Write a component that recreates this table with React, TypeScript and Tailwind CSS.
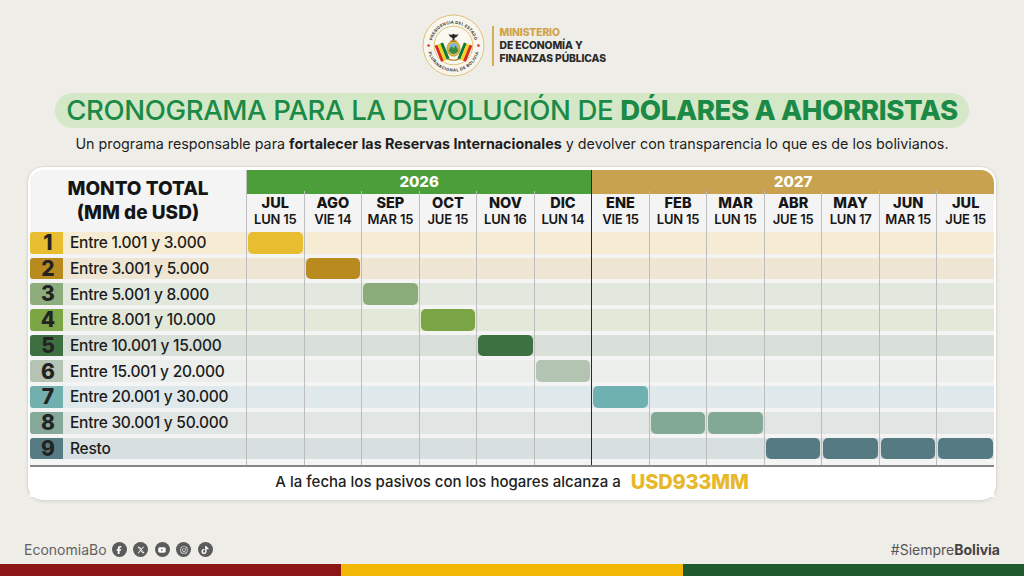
import { FaFacebookF, FaXTwitter, FaYoutube, FaInstagram, FaTiktok } from "react-icons/fa6";

const months: [string, string][] = [
  ["JUL", "LUN 15"], ["AGO", "VIE 14"], ["SEP", "MAR 15"], ["OCT", "JUE 15"], ["NOV", "LUN 16"], ["DIC", "LUN 14"],
  ["ENE", "VIE 15"], ["FEB", "LUN 15"], ["MAR", "LUN 15"], ["ABR", "JUE 15"], ["MAY", "LUN 17"], ["JUN", "MAR 15"], ["JUL", "JUE 15"],
];

type Row = { n: number; label: string; badge: string; band: string; bar: string; cols: number[] };

const rows: Row[] = [
  { n: 1, label: "Entre 1.001 y 3.000", badge: "bg-[#e8bd2f]", band: "bg-[#f5ecd3]", bar: "bg-[#e8bd2f]", cols: [0] },
  { n: 2, label: "Entre 3.001 y 5.000", badge: "bg-[#b98a1e]", band: "bg-[#efe5d3]", bar: "bg-[#b98a1e]", cols: [1] },
  { n: 3, label: "Entre 5.001 y 8.000", badge: "bg-[#8dad7d]", band: "bg-[#e3e8df]", bar: "bg-[#8aac7a]", cols: [2] },
  { n: 4, label: "Entre 8.001 y 10.000", badge: "bg-[#7ca646]", band: "bg-[#e2e9d9]", bar: "bg-[#7aa544]", cols: [3] },
  { n: 5, label: "Entre 10.001 y 15.000", badge: "bg-[#3e6f40]", band: "bg-[#d8e0d9]", bar: "bg-[#3d7141]", cols: [4] },
  { n: 6, label: "Entre 15.001 y 20.000", badge: "bg-[#b4c3b3]", band: "bg-[#ebeeeb]", bar: "bg-[#b3c4b3]", cols: [5] },
  { n: 7, label: "Entre 20.001 y 30.000", badge: "bg-[#72b0b0]", band: "bg-[#dfe9eb]", bar: "bg-[#6fb0b0]", cols: [6] },
  { n: 8, label: "Entre 30.001 y 50.000", badge: "bg-[#86a899]", band: "bg-[#e1e6e4]", bar: "bg-[#82a896]", cols: [7, 8] },
  { n: 9, label: "Resto", badge: "bg-[#577b83]", band: "bg-[#d7dfe1]", bar: "bg-[#567a82]", cols: [9, 10, 11, 12] },
];

function Logo() {
  return (
    <svg width="63" height="63" viewBox="0 0 62 62">
      <defs>
        <path id="topArc" d="M 9.5 31 A 21.5 21.5 0 0 1 52.5 31" />
        <path id="botArc" d="M 8.5 31 A 22.5 22.5 0 0 0 53.5 31" />
      </defs>
      <circle cx="31" cy="31" r="30" fill="#f8f5ec" stroke="#d8b65e" strokeWidth="0.8" />
      <circle cx="31" cy="31" r="19" fill="#fbf8f0" stroke="#d8b65e" strokeWidth="0.8" />
      <text fontSize="4" fill="#3a3a3a" fontFamily="Inter, sans-serif" fontWeight="700" letterSpacing="0.2">
        <textPath href="#topArc" startOffset="50%" textAnchor="middle">PRESIDENCIA DEL ESTADO</textPath>
      </text>
      <text fontSize="4" fill="#3a3a3a" fontFamily="Inter, sans-serif" fontWeight="700" letterSpacing="0.1">
        <textPath href="#botArc" startOffset="50%" textAnchor="middle" dominantBaseline="hanging">PLURINACIONAL DE BOLIVIA</textPath>
      </text>
      <circle cx="6.5" cy="31" r="1.3" fill="#d6332a" />
      <circle cx="55.5" cy="31" r="1.3" fill="#d6332a" />
      <g transform="rotate(-22 31 40)">
        <rect x="17" y="25" width="3" height="17" fill="#d52b1e" />
        <rect x="20" y="25" width="3" height="17" fill="#f4d21f" />
        <rect x="23" y="25" width="3" height="17" fill="#0b7a36" />
      </g>
      <g transform="rotate(22 31 40)">
        <rect x="36" y="25" width="3" height="17" fill="#0b7a36" />
        <rect x="39" y="25" width="3" height="17" fill="#f4d21f" />
        <rect x="42" y="25" width="3" height="17" fill="#d52b1e" />
      </g>
      <ellipse cx="31" cy="34" rx="6.5" ry="7.5" fill="#e6b93a" stroke="#a97c18" strokeWidth="0.6" />
      <ellipse cx="31" cy="34" rx="4.8" ry="5.8" fill="#7fb6d8" />
      <path d="M26.4 35.5 L29 31.5 L31 34 L33 31 L35.6 35.5 L35.4 37 Q31 41.5 26.6 37 Z" fill="#3e8a3e" />
      <path d="M31 19.5 Q29.5 21 26 20 Q27.5 23 30 23.5 L30 26 L32 26 L32 23.5 Q34.5 23 36 20 Q32.5 21 31 19.5 Z" fill="#2a2a2a" />
      <rect x="28" y="26" width="6" height="1.5" fill="#a97c18" />
      <path d="M25 44 Q31 47 37 44" stroke="#a97c18" strokeWidth="1" fill="none" />
    </svg>
  );
}

export default function App() {
  return (
    <div className="relative flex h-[576px] w-[1024px] flex-col overflow-hidden bg-[#efede8] font-['Inter','Noto_Sans',sans-serif] text-[#1c1c1c]">
      {/* Header logo */}
      <div className="flex items-center justify-center pt-[14px]">
        <div className="flex items-center pl-[4px]">
          <Logo />
          <div className="ml-[7px] h-[40px] w-[1.5px] bg-[#d3ac55]" />
          <div className="ml-[6px] flex flex-col text-[10.3px] font-extrabold leading-[13px] tracking-[-0.1px]">
            <span className="text-[#cfa347]">MINISTERIO</span>
            <span className="text-[#2a2a2a]">DE ECONOMÍA Y</span>
            <span className="text-[#2a2a2a]">FINANZAS PÚBLICAS</span>
          </div>
        </div>
      </div>

      {/* Title */}
      <div className="mx-[55px] mt-[16px] flex h-[35px] items-center justify-center rounded-full bg-[#d4e8c7]">
        <h1 className="whitespace-nowrap text-[27.6px] leading-none tracking-[-0.4px] text-[#1c8a47]">
          <span className="font-medium">CRONOGRAMA PARA LA DEVOLUCIÓN DE </span>
          <span className="font-extrabold">DÓLARES A AHORRISTAS</span>
        </h1>
      </div>

      <p className="mt-[7px] whitespace-nowrap text-center text-[14.3px] leading-[18px] text-[#1e1e1e]">
        Un programa responsable para <span className="font-bold">fortalecer las Reservas Internacionales</span> y devolver con transparencia lo que es de los bolivianos.
      </p>

      {/* Card */}
      <div className="mx-[27px] mt-[13px] rounded-[16px] border border-[#dedbd5] bg-white px-[2px] pt-[3px] pb-[3px] shadow-[0_1px_3px_rgba(0,0,0,0.08)]">
        <div className="overflow-hidden rounded-t-[13px] bg-[#f4f4f4]">
          {/* header */}
          <div className="flex">
            <div className="flex w-[216px] flex-col items-center justify-center pt-[1px] text-[19px] font-extrabold leading-[24px] text-[#151515]">
              <span>MONTO TOTAL</span>
              <span>(MM de USD)</span>
            </div>
            <div className="flex flex-1 flex-col">
              <div className="grid h-[21px] grid-cols-[repeat(13,minmax(0,1fr))]">
                <div className="col-span-6 flex items-center justify-center border-l border-[#bdbdbd] bg-[#4c9e3b] pt-[1px] text-[15px] font-extrabold text-white">
                  2026
                </div>
                <div className="col-span-7 flex items-center justify-center rounded-tr-[11px] border-l border-[#2a2a2a] bg-[#c8a24e] pt-[1px] text-[15px] font-extrabold text-white">
                  2027
                </div>
              </div>
              <div className="grid h-[39px] grid-cols-[repeat(13,minmax(0,1fr))]">
                {months.map(([m, d], i) => (
                  <div
                    key={i}
                    className={`flex flex-col items-center justify-center border-l ${i === 6 ? "border-[#2a2a2a]" : "border-[#bdbdbd]"}`}
                  >
                    <span className="text-[14.5px] font-extrabold leading-[16px] text-[#161616]">{m}</span>
                    <span className="text-[13px] font-semibold leading-[16px] tracking-[-0.2px] text-[#161616]">{d}</span>
                  </div>
                ))}
              </div>
            </div>
          </div>

          {/* rows */}
          {rows.map((r) => (
            <div key={r.n} className="flex h-[25.7px]">
              <div className="flex w-[216px] py-[2px]">
                <div className={`flex w-[33px] items-center justify-center rounded-l-[3px] pl-[3px] text-[21px] font-extrabold text-[#232323] ${r.badge}`}>
                  {r.n}
                </div>
                <div className={`flex flex-1 items-center pl-[7px] text-[15.5px] font-medium tracking-[-0.25px] text-[#1c1c1c] ${r.band}`}>
                  {r.label}
                </div>
              </div>
              <div className="grid flex-1 grid-cols-[repeat(13,minmax(0,1fr))]">
                {months.map((_, i) => (
                  <div key={i} className={`border-l py-[2px] ${i === 6 ? "border-[#2a2a2a]" : "border-[#bdbdbd]"}`}>
                    <div className={`h-full ${r.band}`}>
                      {r.cols.includes(i) && <div className={`mx-[1px] h-full rounded-[5px] ${r.bar}`} />}
                    </div>
                  </div>
                ))}
              </div>
            </div>
          ))}
          <div className="flex h-[4px]">
            <div className="w-[216px]" />
            <div className="grid flex-1 grid-cols-[repeat(13,minmax(0,1fr))]">
              {months.map((_, i) => (
                <div key={i} className={`border-l ${i === 6 ? "border-[#2a2a2a]" : "border-[#bdbdbd]"}`} />
              ))}
            </div>
          </div>
        </div>
        <div className="h-[2px] bg-[#858585]" />
        <div className="flex h-[30px] items-center justify-center bg-white">
          <span className="text-[15px] font-medium text-[#222]">A la fecha los pasivos con los hogares alcanza a</span>
          <span className="ml-[10px] text-[20px] font-extrabold tracking-[-0.2px] text-[#e7b829]">USD933MM</span>
        </div>
      </div>

      {/* footer */}
      <div className="mt-auto flex items-center justify-between px-[24px] pb-[4px]">
        <div className="flex items-center">
          <span className="text-[14px] text-[#626262]">EconomiaBo</span>
          <div className="ml-[5px] flex items-center gap-[6.5px]">
            {[FaFacebookF, FaXTwitter, FaYoutube, FaInstagram, FaTiktok].map((Icon, i) => (
              <span key={i} className="flex h-[15px] w-[15px] items-center justify-center rounded-full bg-[#5b5b5b] text-white">
                <Icon size={8} />
              </span>
            ))}
          </div>
        </div>
        <span className="text-[14px] text-[#555]">
          #Siempre<span className="font-bold text-[#444]">Bolivia</span>
        </span>
      </div>
      <div className="flex h-[12px]">
        <div className="w-[341px] bg-[#8a1616]" />
        <div className="w-[342px] bg-[#f2b705]" />
        <div className="flex-1 bg-[#1e5a2e]" />
      </div>
    </div>
  );
}
